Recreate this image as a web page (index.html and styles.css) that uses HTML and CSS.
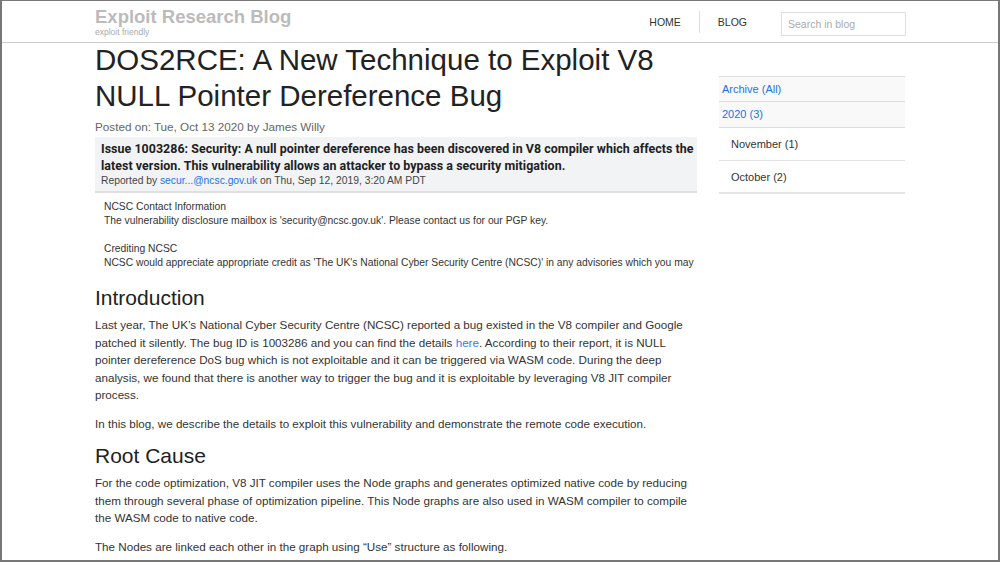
FILE: index.html
```html
<!DOCTYPE html>
<html>
<head>
<meta charset="utf-8">
<link rel="stylesheet" href="styles.css">
</head>
<body>
<div class="frame">
  <header class="topbar">
    <div class="container topbar-inner">
      <div class="brand">
        <div class="brand-title">Exploit Research Blog</div>
        <div class="brand-sub">exploit friendly</div>
      </div>
      <nav class="nav">
        <a class="nav-link">HOME</a>
        <span class="nav-sep"></span>
        <a class="nav-link">BLOG</a>
        <input class="search" type="text" placeholder="Search in blog">
      </nav>
    </div>
  </header>
  <div class="container layout">
    <main class="post">
      <h1 class="post-title">DOS2RCE: A New Technique to Exploit V8 NULL Pointer Dereference Bug</h1>
      <div class="posted">Posted on: Tue, Oct 13 2020 by James Willy</div>
      <div class="issue">
        <div class="issue-title">Issue 1003286: Security: A null pointer dereference has been discovered in V8 compiler which affects the latest version. This vulnerability allows an attacker to bypass a security mitigation.</div>
        <div class="issue-meta">Reported by <a class="link">secur...@ncsc.gov.uk</a> on Thu, Sep 12, 2019, 3:20 AM PDT</div>
      </div>
      <div class="ncsc">
        <div class="ncsc-line">NCSC Contact Information</div>
        <div class="ncsc-line">The vulnerability disclosure mailbox is 'security@ncsc.gov.uk'. Please contact us for our PGP key.</div>
        <div class="ncsc-gap"></div>
        <div class="ncsc-line">Crediting NCSC</div>
        <div class="ncsc-line">NCSC would appreciate appropriate credit as 'The UK's National Cyber Security Centre (NCSC)' in any advisories which you may</div>
      </div>
      <h2 class="section">Introduction</h2>
      <p class="para">Last year, The UK’s National Cyber Security Centre (NCSC) reported a bug existed in the V8 compiler and Google patched it silently. The bug ID is 1003286 and you can find the details <a class="link">here</a>. According to their report, it is NULL pointer dereference DoS bug which is not exploitable and it can be triggered via WASM code. During the deep analysis, we found that there is another way to trigger the bug and it is exploitable by leveraging V8 JIT compiler process.</p>
      <p class="para">In this blog, we describe the details to exploit this vulnerability and demonstrate the remote code execution.</p>
      <h2 class="section">Root Cause</h2>
      <p class="para">For the code optimization, V8 JIT compiler uses the Node graphs and generates optimized native code by reducing them through several phase of optimization pipeline. This Node graphs are also used in WASM compiler to compile the WASM code to native code.</p>
      <p class="para">The Nodes are linked each other in the graph using “Use” structure as following.</p>
    </main>
    <aside class="sidebar">
      <ul class="archive">
        <li class="arch-item arch-top"><a class="link">Archive (All)</a></li>
        <li class="arch-item arch-top"><a class="link">2020 (3)</a></li>
        <li class="arch-item arch-month">November (1)</li>
        <li class="arch-item arch-month">October (2)</li>
      </ul>
    </aside>
  </div>
</div>
</body>
</html>
```
FILE: styles.css
```css
* { box-sizing: border-box; }
html, body { margin: 0; padding: 0; background: #fff; }
body { font-family: "Liberation Sans", Arial, sans-serif; color: #333; }
.frame {
  width: 1000px;
  height: 562px;
  border: 2px solid #777;
  border-top-width: 1px;
  overflow: hidden;
}
.container { width: 810px; margin: 0 auto; }
.topbar { border-bottom: 1px solid #ccc; height: 42px; }
.topbar-inner { display: flex; justify-content: space-between; align-items: flex-start; margin-left: 93px; width: 811px; }
.brand { padding-top: 6px; }
.brand-title { font-size: 18.5px; font-weight: bold; color: #bbb; line-height: 20px; }
.brand-sub { font-size: 8.5px; color: #aaa; line-height: 10px; }
.nav { display: flex; align-items: center; height: 42px; }
.nav-link { font-size: 10.5px; color: #333; }
.nav-sep { width: 1px; height: 22px; background: #ddd; margin: 0 18px; }
.search {
  margin-left: 34px;
  width: 125px;
  height: 24px;
  border: 1px solid #ddd;
  background: #fff;
  font-family: "Liberation Sans", Arial, sans-serif;
  font-size: 10.5px;
  padding: 0 6px;
  margin-top: 3px;
}
.search::placeholder { color: #aaa; }
.layout { display: flex; gap: 22px; }
.post { width: 602px; flex: none; }
.post-title {
  font-size: 29.5px;
  font-weight: normal;
  color: #222;
  line-height: 36px;
  margin: -1px 0 0 0;
}
.posted { font-size: 11.7px; color: #666; margin-top: 5px; line-height: 16px; }
.issue {
  margin-top: 2px;
  background: #f1f3f4;
  border-bottom: 2px solid #e0e0e0;
  padding: 3px 0 3px 6px;
}
.issue-title {
  font-family: Roboto, "Liberation Sans", sans-serif;
  font-weight: bold;
  font-size: 12.4px;
  line-height: 17px;
  color: #202124;
  letter-spacing: 0.06px;
}
.issue-meta { font-size: 10.3px; color: #444; line-height: 14px; }
.link { color: #1a73e8; }
.para .link { color: #1e7ff0; }
.ncsc { padding: 7px 0 4px 9px; font-size: 10.3px; color: #333; line-height: 14px; }
.ncsc-line { white-space: nowrap; overflow: hidden; }
.ncsc-gap { height: 14px; }
.section { font-size: 21px; font-weight: normal; color: #222; margin: 12px 0 6px 0; line-height: 24px; }
.para { font-size: 11.65px; line-height: 17.5px; margin: 0 0 11px 0; color: #333; }
.sidebar { width: 186px; flex: none; padding-top: 33px; }
.archive { list-style: none; margin: 0; padding: 0; border-top: 1px solid #ddd; }
.arch-item { font-size: 11px; border-bottom: 1px solid #e3e3e3; }
.arch-top { background: #f9f9f9; height: 25px; line-height: 24px; padding-left: 3px; border-bottom: 1px solid #ddd; }
.arch-top:nth-child(2) { height: 26px; line-height: 25px; }
.arch-month { height: 33px; line-height: 32px; padding-left: 12px; color: #333; }
.arch-item:last-child { border-bottom: 2px solid #e5e5e5; }
```
